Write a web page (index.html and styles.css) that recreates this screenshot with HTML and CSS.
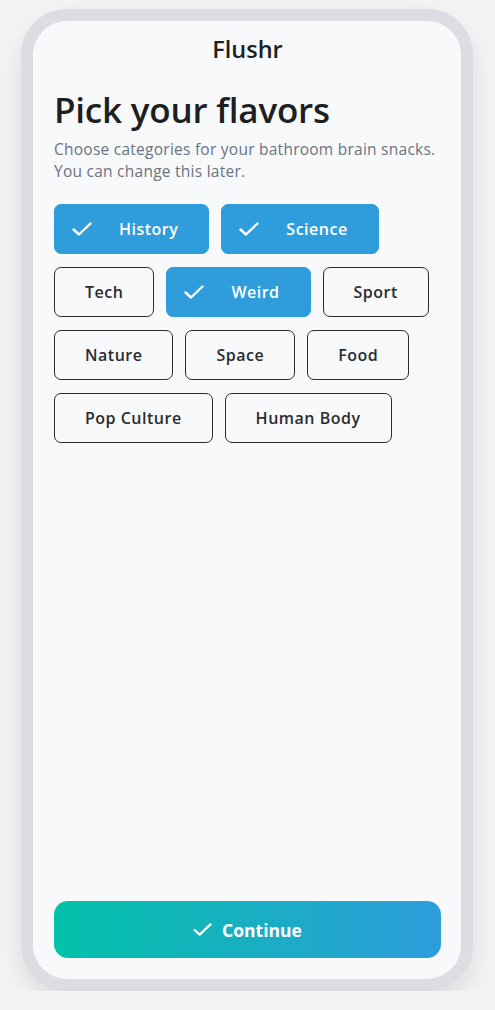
FILE: index.html
```html
<!DOCTYPE html>
<html>
<head>
<meta charset="utf-8">
<link rel="stylesheet" href="styles.css">
</head>
<body>
<div class="phone">
  <div class="screen">
    <header class="appbar">Flushr</header>
    <h1 class="title">Pick your flavors</h1>
    <p class="subtitle">Choose categories for your bathroom brain snacks.<br>You can change this later.</p>
    <div class="chips">
      <button class="chip selected"><svg class="check" viewBox="0 0 20 14"><polyline points="1.5,7.5 7,12.5 18.5,1.5"/></svg><span>History</span></button>
      <button class="chip selected"><svg class="check" viewBox="0 0 20 14"><polyline points="1.5,7.5 7,12.5 18.5,1.5"/></svg><span>Science</span></button>
      <button class="chip">Tech</button>
      <button class="chip selected"><svg class="check" viewBox="0 0 20 14"><polyline points="1.5,7.5 7,12.5 18.5,1.5"/></svg><span>Weird</span></button>
      <button class="chip">Sport</button>
      <button class="chip">Nature</button>
      <button class="chip">Space</button>
      <button class="chip">Food</button>
      <button class="chip">Pop Culture</button>
      <button class="chip">Human Body</button>
    </div>
    <div class="spacer"></div>
    <button class="continue"><svg class="check small" viewBox="0 0 20 14"><polyline points="1.5,7.5 7,12.5 18.5,1.5"/></svg><span>Continue</span></button>
  </div>
</div>
</body>
</html>
```

FILE: styles.css
```css
* { box-sizing: border-box; }
html, body { margin: 0; padding: 0; }
body {
  background: #f4f4f5;
  font-family: "Open Sans", "Noto Sans", sans-serif;
  color: #1f2226;
}
.phone {
  width: 452px;
  height: 982px;
  margin: 9px 0 0 21px;
  border: 12px solid #dcdce3;
  border-radius: 46px;
  background: #f8f9fb;
  box-shadow: 0 12px 30px rgba(0, 0, 0, 0.10);
  overflow: hidden;
}
.screen {
  height: 100%;
  display: flex;
  flex-direction: column;
  padding: 0 20px 21px 21px;
}
.appbar {
  height: 56px;
  display: flex;
  align-items: center;
  justify-content: center;
  font-size: 23.5px;
  font-weight: 600;
  color: #1d1f22;
}
.title {
  margin: 11px 0 0;
  font-size: 35px;
  font-weight: 600;
  line-height: 44px;
  color: #1d1f22;
  letter-spacing: -0.2px;
}
.subtitle {
  margin: 6px 0 0;
  font-size: 15.5px;
  line-height: 22px;
  letter-spacing: 0.25px;
  color: #6b7280;
}
.chips {
  margin-top: 22px;
  display: flex;
  flex-wrap: wrap;
  gap: 13px 12px;
}
.chip {
  height: 50px;
  padding: 0 30px;
  border: 1.5px solid #2a2c30;
  border-radius: 7px;
  background: transparent;
  font-family: inherit;
  font-size: 16px;
  font-weight: 600;
  letter-spacing: 0.5px;
  color: #2a2c30;
  display: flex;
  align-items: center;
}
.chip.selected {
  background: #2f9ddc;
  border-color: #2f9ddc;
  color: #ffffff;
  padding: 0 30px 0 17px;
}
.check {
  width: 20px;
  height: 14px;
  fill: none;
  stroke: #ffffff;
  stroke-width: 2.4;
  stroke-linecap: round;
  stroke-linejoin: round;
}
.chip .check { margin-right: 27px; }
.spacer { flex: 1; }
.continue {
  height: 57px;
  border: none;
  border-radius: 14px;
  background: linear-gradient(90deg, #03c2a9 0%, #2d9cdb 100%);
  color: #ffffff;
  font-family: inherit;
  font-size: 17.5px;
  font-weight: 700;
  display: flex;
  align-items: center;
  justify-content: center;
  gap: 10px;
}
.continue .check { width: 19px; height: 13px; }
```
